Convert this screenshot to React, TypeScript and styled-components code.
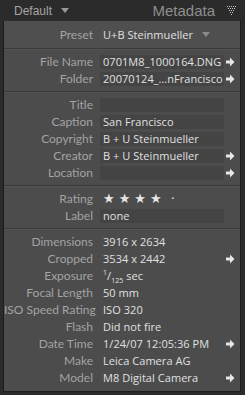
import React from 'react';
import styled, { createGlobalStyle } from 'styled-components';

const GlobalStyle = createGlobalStyle`
  html, body {
    margin: 0;
    padding: 0;
    background: #2b2b2b;
  }
  body {
    font-family: 'Open Sans', sans-serif;
  }
`;

interface Field {
  label: string;
  value?: React.ReactNode;
  boxed?: boolean;
  arrow?: boolean;
}

const sections: Field[][] = [
  [
    { label: 'File Name', value: '0701M8_1000164.DNG', boxed: true, arrow: true },
    { label: 'Folder', value: '20070124_…nFrancisco', boxed: true, arrow: true },
  ],
  [
    { label: 'Title', boxed: true },
    { label: 'Caption', value: 'San Francisco', boxed: true },
    { label: 'Copyright', value: 'B + U Steinmueller', boxed: true },
    { label: 'Creator', value: 'B + U Steinmueller', boxed: true, arrow: true },
    { label: 'Location', boxed: true, arrow: true },
  ],
];

const exifRows: Field[] = [
  { label: 'Dimensions', value: '3916 x 2634' },
  { label: 'Cropped', value: '3534 x 2442', arrow: true },
  {
    label: 'Exposure',
    value: (
      <>
        <sup>1</sup>/<sub>125</sub> sec
      </>
    ),
  },
  { label: 'Focal Length', value: '50 mm' },
  { label: 'ISO Speed Rating', value: 'ISO 320' },
  { label: 'Flash', value: 'Did not fire' },
  { label: 'Date Time', value: '1/24/07 12:05:36 PM', arrow: true },
  { label: 'Make', value: 'Leica Camera AG' },
  { label: 'Model', value: 'M8 Digital Camera', arrow: true },
];

const Arrow = () => (
  <svg width="9" height="10" viewBox="0 0 9 10">
    <path d="M0 3.5 H4 V0.5 L8.5 5 L4 9.5 V6.5 H0 Z" fill="#e6e6e6" />
  </svg>
);

const DotTriangle = () => (
  <svg width="10" height="9" viewBox="0 0 10 9">
    {[0, 2, 4, 6, 8].map((x) => (
      <rect key={'a' + x} x={x} y={0} width="1" height="1" fill="#c8c8c8" />
    ))}
    {[1, 3, 5, 7].map((x) => (
      <rect key={'b' + x} x={x} y={2} width="1" height="1" fill="#c8c8c8" />
    ))}
    {[2, 4, 6].map((x) => (
      <rect key={'c' + x} x={x} y={4} width="1" height="1" fill="#c8c8c8" />
    ))}
    {[3, 5].map((x) => (
      <rect key={'d' + x} x={x} y={6} width="1" height="1" fill="#c8c8c8" />
    ))}
    <rect x={4} y={8} width="1" height="1" fill="#c8c8c8" />
  </svg>
);

const Caret = ({ color }: { color: string }) => (
  <svg width="8" height="5" viewBox="0 0 8 5">
    <path d="M0 0 H8 L4 5 Z" fill={color} />
  </svg>
);

const FieldRow = ({ label, value, boxed, arrow }: Field) => (
  <Row>
    <Label>{label}</Label>
    <Value $boxed={boxed}>{value}</Value>
    <ArrowSlot>{arrow && <Arrow />}</ArrowSlot>
  </Row>
);

export default function App() {
  return (
    <>
      <GlobalStyle />
      <Page>
        <Header>
          <PresetMenu>
            Default <Caret color="#9a9a9a" />
          </PresetMenu>
          <Title>Metadata</Title>
          <DotTriangle />
        </Header>
        <Panel>
          <PresetSection>
            <Row>
              <Label>Preset</Label>
              <PresetValue>
                U+B Steinmueller <Caret color="#8a8a8a" />
              </PresetValue>
            </Row>
          </PresetSection>
          {sections.map((rows, i) => (
            <Section key={i}>
              {rows.map((r) => (
                <FieldRow key={r.label} {...r} />
              ))}
            </Section>
          ))}
          <Section>
            <Row>
              <Label>Rating</Label>
              <Stars>
                ★★★★<Dot>·</Dot>
              </Stars>
            </Row>
            <FieldRow label="Label" value="none" boxed />
          </Section>
          <Section>
            {exifRows.map((r) => (
              <FieldRow key={r.label} {...r} />
            ))}
          </Section>
        </Panel>
      </Page>
    </>
  );
}

const Page = styled.div`
  width: 245px;
  height: 395px;
  display: flex;
  flex-direction: column;
  padding: 0 4px 3px 3px;
  box-sizing: border-box;
`;

const Header = styled.div`
  height: 21px;
  display: flex;
  align-items: center;
  padding: 0 4px 0 11px;
  gap: 8px;
`;

const PresetMenu = styled.div`
  display: flex;
  align-items: center;
  gap: 9px;
  font-family: 'Liberation Sans', sans-serif;
  font-size: 12px;
  color: #a6a6a6;
  flex: 1;
`;

const Title = styled.div`
  font-family: 'Liberation Sans', sans-serif;
  font-size: 15px;
  color: #8f8f8f;
  margin-right: 4px;
`;

const Panel = styled.div`
  flex: 1;
  background: #4c4c4c;
  border: 1px solid #1c1c1c;
  border-top: none;
  display: flex;
  flex-direction: column;
`;

const Section = styled.div`
  padding: 4px 0 4px;
  border-top: 1px solid #3a3a3a;
  box-shadow: inset 0 1px 0 #535353;
`;

const PresetSection = styled.div`
  height: 27px;
  display: flex;
  align-items: center;
  background: #4f4f4f;
`;

const Row = styled.div`
  height: 17px;
  display: flex;
  align-items: center;
  width: 100%;
`;

const Label = styled.div`
  width: 89px;
  flex: none;
  text-align: right;
  font-family: Lato, sans-serif;
  font-size: 12px;
  color: #a3a3a3;
  white-space: nowrap;
`;

const Value = styled.div<{ $boxed?: boolean }>`
  margin-left: 7px;
  width: 124px;
  height: 14px;
  flex: none;
  box-sizing: border-box;
  padding-left: 3px;
  background: ${(p) => (p.$boxed ? '#444444' : 'transparent')};
  font-family: 'Open Sans', sans-serif;
  font-size: 11px;
  letter-spacing: 0.05px;
  line-height: 14px;
  color: #e0e0e0;
  white-space: nowrap;
  overflow: visible;

  sup,
  sub {
    font-size: 7px;
    line-height: 0;
  }
`;

const ArrowSlot = styled.div`
  width: 12px;
  display: flex;
  justify-content: center;
  align-items: center;
`;

const PresetValue = styled.div`
  margin-left: 7px;
  padding-left: 3px;
  display: flex;
  align-items: center;
  gap: 9px;
  font-family: 'Open Sans', sans-serif;
  font-size: 11px;
  letter-spacing: 0.05px;
  color: #e0e0e0;
`;

const Stars = styled.div`
  margin-left: 7px;
  padding-left: 3px;
  font-family: 'DejaVu Sans', sans-serif;
  font-size: 13px;
  letter-spacing: 4px;
  color: #e6e6e6;
`;

const Dot = styled.span`
  margin-left: 5px;
`;
